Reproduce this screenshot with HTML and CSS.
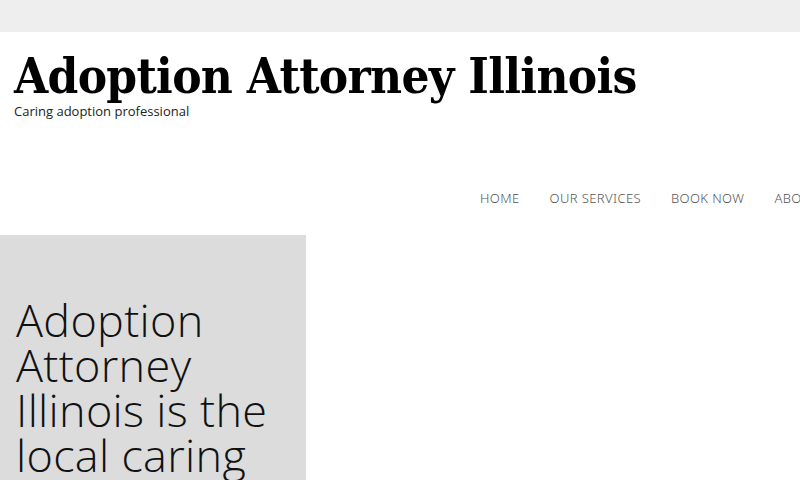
FILE: index.html
```html
<!DOCTYPE html>
<html lang="en">
<head>
  <meta charset="UTF-8" />
  <meta name="viewport" content="width=device-width, initial-scale=1.0"/>
  <title>Adoption Attorney Illinois</title>
  <link rel="stylesheet" href="styles.css">
</head>
<body>

<div class="top-bar"></div>

<header class="site-header">
  <div class="branding">
    <h1 class="site-title">Adoption Attorney Illinois</h1>
    <p class="site-tagline">Caring adoption professional</p>
  </div>
  <nav class="main-nav">
    <a href="#">HOME</a>
    <a href="#">OUR SERVICES</a>
    <a href="#">BOOK NOW</a>
    <a href="#">ABOUT US</a>
    <a href="#">CONTACT</a>
  </nav>
</header>

<!-- Intro block -->
<section class="intro">
  <div class="intro-box">
    <h2>Adoption Attorney Illinois is the local caring adoption professional</h2>
  </div>
</section>

</body>
</html>
```

FILE: styles.css
```css
/* Basic reset */
* { margin: 0; padding: 0; box-sizing: border-box; }
html, body { overflow: hidden; }
body { font-family: "Open Sans", Arial, sans-serif; background: #fff; color: #222; height: 480px; }

.top-bar { height: 32px; background-color: #eeeeee; }

/* Header */
.site-header { height: 203px; display: flex; flex-direction: column; }
.branding { padding: 13px 14px 0; }
.site-title { font-family: "DejaVu Serif", "Liberation Serif", serif; font-stretch: condensed; font-weight: bold; font-size: 49px; letter-spacing: -0.7px; line-height: 62px; color: #000; white-space: nowrap; }
.site-tagline { font-size: 13px; line-height: 18px; color: #222; margin-top: -5px; }

.main-nav { display: flex; margin-top: 69px; margin-left: 465px; white-space: nowrap; }
.main-nav a { font-family: "Noto Sans", Arial, sans-serif; font-weight: 300; font-size: 13px; letter-spacing: 0.4px; color: #555; text-decoration: none; padding: 0 15px; line-height: 18px; }

/* Intro */
.intro { display: flex; }
.intro-box { width: 306px; height: 245px; background-color: #dcdcdc; padding: 62px 16px 0; overflow: hidden; }
.intro-box h2 { font-family: "Open Sans", Lato, sans-serif; font-weight: 300; font-size: 45px; letter-spacing: 0.3px; line-height: 45px; color: #111; }
```
